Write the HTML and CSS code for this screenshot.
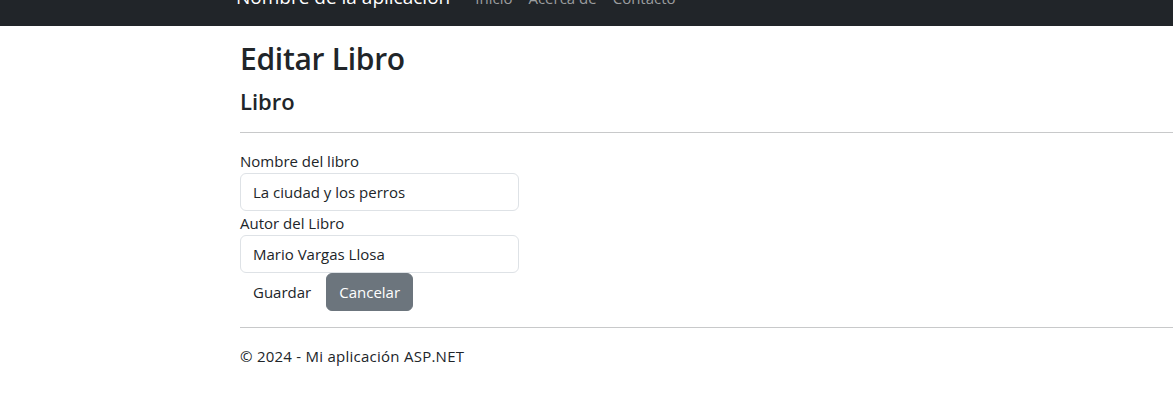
FILE: index.html
```html
<!DOCTYPE html>
<html lang="es">
<head>
<meta charset="utf-8">
<title>Editar Libro</title>
<link rel="stylesheet" href="styles.css">
</head>
<body>
<header class="navbar">
  <div class="nav-inner">
    <a class="brand" href="#">Nombre de la aplicación</a>
    <ul class="nav-links">
      <li><a href="#">Inicio</a></li>
      <li><a href="#">Acerca de</a></li>
      <li><a href="#">Contacto</a></li>
    </ul>
  </div>
</header>
<main class="content">
  <h1 class="title">Editar Libro</h1>
  <h4 class="subtitle">Libro</h4>
  <hr class="rule rule-top">
  <form class="form">
    <label class="label" for="nombre">Nombre del libro</label>
    <input class="input" id="nombre" type="text" value="La ciudad y los perros">
    <label class="label" for="autor">Autor del Libro</label>
    <input class="input" id="autor" type="text" value="Mario Vargas Llosa">
    <div class="actions">
      <button class="btn btn-plain" type="submit">Guardar</button>
      <a class="btn btn-secondary" href="#">Cancelar</a>
    </div>
  </form>
  <hr class="rule rule-bottom">
  <footer class="footer">© 2024 - Mi aplicación ASP.NET</footer>
</main>
</body>
</html>
```
FILE: styles.css
```css
* { box-sizing: border-box; }
html, body { margin: 0; padding: 0; background: #fff; }
body {
  font-family: "Open Sans", "Noto Sans", sans-serif;
  font-size: 15px;
  line-height: 24px;
  color: #212529;
}
.navbar {
  height: 26px;
  background: #212529;
  overflow: hidden;
}
.nav-inner {
  display: flex;
  align-items: baseline;
  margin-top: -18px;
  padding-left: 236px;
}
.brand {
  font-size: 19px;
  line-height: 30px;
  color: #fff;
  text-decoration: none;
  margin-right: 17px;
}
.nav-links {
  display: flex;
  list-style: none;
  margin: 0;
  padding: 0;
}
.nav-links a {
  display: block;
  padding: 0 8px;
  font-size: 15px;
  color: #9b9d9f;
  text-decoration: none;
}
.content {
  padding: 14px 0 0 240px;
}
.title {
  margin: 0 0 10px;
  font-size: 30px;
  line-height: 38px;
  font-weight: 600;
  letter-spacing: -0.3px;
}
.subtitle {
  margin: 0;
  font-size: 22px;
  line-height: 27px;
  font-weight: 600;
}
.rule {
  border: 0;
  border-top: 1px solid #c8c9ca;
  margin: 0;
}
.rule-top { margin: 17px 0 16px; }
.rule-bottom { margin: 16px 0 16px; }
.form { display: flex; flex-direction: column; align-items: flex-start; }
.label { display: block; }
.input {
  width: 279px;
  height: 38px;
  padding: 6px 12px;
  border: 1px solid #dee2e6;
  border-radius: 6px;
  font: inherit;
  color: #212529;
  background: #fff;
}
.actions { display: flex; gap: 2px; }
.btn {
  display: inline-block;
  height: 38px;
  padding: 6px 12px;
  border: 1px solid transparent;
  border-radius: 6px;
  font: inherit;
  line-height: 24px;
  text-decoration: none;
  cursor: pointer;
}
.btn-plain { background: transparent; color: #212529; }
.btn-secondary { background: #6c757d; border-color: #6c757d; color: #fff; }
.footer { line-height: 24px; letter-spacing: 0.25px; }
```
